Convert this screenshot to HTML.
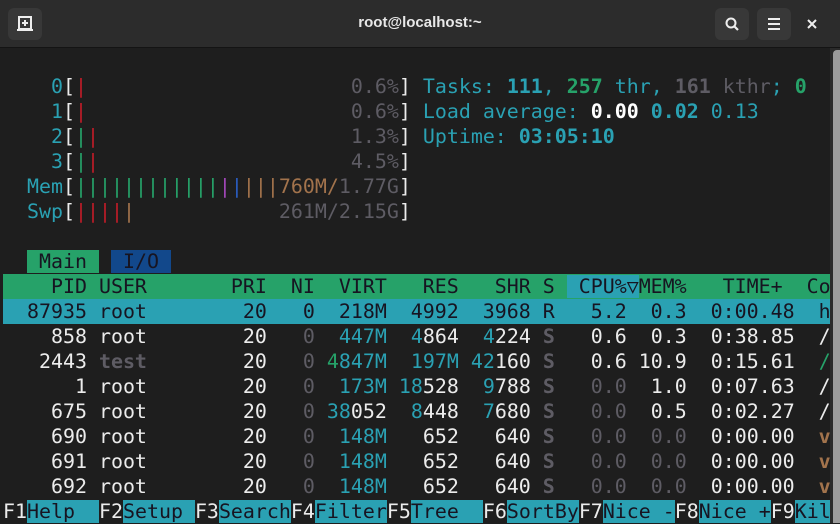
<!DOCTYPE html>
<html><head><meta charset="utf-8"><style>
html,body{margin:0;padding:0;background:#1e1e1e;width:840px;height:523px;overflow:hidden}
.tb{position:absolute;left:0;top:0;width:840px;height:47px;background:#2c2c2c;border-bottom:1px solid #141414}
.btn{position:absolute;top:8px;width:34px;height:32px;background:#383838;border-radius:6px}
.title{position:absolute;left:0;width:840px;top:14px;text-align:center;color:#e8e8e8;font:bold 15px "Liberation Sans",sans-serif}
.term{position:absolute;left:3px;top:74px;font-family:"DejaVu Sans Mono","Liberation Mono",monospace;font-size:19.93px;color:#ececec}
.r{height:25px;line-height:25px;white-space:pre}
.c{color:#2aa1b3}.cb{color:#2aa1b3;font-weight:bold}.g{color:#26a269}.gb{color:#26a269;font-weight:bold}
.wb{color:#fff;font-weight:bold}.k{color:#5e5c64}.kb{color:#5e5c64;font-weight:bold}
.rd{color:#c01c28}.m{color:#a347ba}.bl{color:#2a5dbf}.o{color:#a2734c}.ob{color:#a2734c;font-weight:bold}
.hd{background:#26a269;color:#171421;width:828px}
.sel{background:#2aa1b3;color:#171421;width:828px}
.cy{background:#2aa1b3;color:#171421}
.gn{background:#26a269;color:#171421}
.bu{background:#12488b;color:#171421}
.sb{position:absolute;left:830px;top:48px;width:10px;height:475px;background:#2a2a2a}
.th{position:absolute;left:833px;top:50px;width:7px;height:473px;background:#9c9c9c;border-radius:4px 0 0 0}
</style></head><body>
<div class="tb">
<div class="btn" style="left:8px"><svg width="34" height="32" viewBox="0 0 34 32"><rect x="11" y="9" width="12" height="12" fill="none" stroke="#eee" stroke-width="2"/><path d="M9 22h16M17 12v6M14 15h6" stroke="#eee" stroke-width="2"/></svg></div>
<div class="title">root@localhost:~</div>
<div class="btn" style="left:715px"><svg width="34" height="32" viewBox="0 0 34 32"><circle cx="16" cy="15" r="4.5" fill="none" stroke="#eee" stroke-width="2"/><path d="M19 18l4 4" stroke="#eee" stroke-width="2.2"/></svg></div>
<div class="btn" style="left:757px"><svg width="34" height="32" viewBox="0 0 34 32"><path d="M11 11h12M11 16h12M11 21h12" stroke="#eee" stroke-width="2"/></svg></div>
<svg style="position:absolute;left:805px;top:17px" width="14" height="14" viewBox="0 0 14 14"><path d="M3 3l8 8M11 3l-8 8" stroke="#eee" stroke-width="2"/></svg>
</div>
<div class="term">
<div class="r">    <span class="c">0</span>[<span class="rd">|</span>                      <span class="k">0.6%</span>] <span class="c">Tasks: </span><span class="cb">111</span><span class="c">, </span><span class="gb">257</span><span class="c"> thr, </span><span class="kb">161</span><span class="k"> kthr</span><span class="c">; </span><span class="gb">0</span></div>
<div class="r">    <span class="c">1</span>[<span class="rd">|</span>                      <span class="k">0.6%</span>] <span class="c">Load average: </span><span class="wb">0.00</span> <span class="cb">0.02</span> <span class="c">0.13</span></div>
<div class="r">    <span class="c">2</span>[<span class="g">|</span><span class="rd">|</span>                     <span class="k">1.3%</span>] <span class="c">Uptime: </span><span class="cb">03:05:10</span></div>
<div class="r">    <span class="c">3</span>[<span class="g">|</span><span class="rd">|</span>                     <span class="k">4.5%</span>]</div>
<div class="r">  <span class="c">Mem</span>[<span class="g">||||||||||||</span><span class="m">|</span><span class="bl">|</span><span class="o">|||760M/</span><span class="k">1.77G</span>]</div>
<div class="r">  <span class="c">Swp</span>[<span class="rd">||||</span><span class="o">|</span>            <span class="k">261M/2.15G</span>]</div>
<div class="r"> </div>
<div class="r">  <span class="gn"> Main </span> <span class="bu"> I/O </span></div>
<div class="r hd">    PID USER       PRI  NI  VIRT   RES   SHR S <span class="cy"> CPU%▽</span>MEM%   TIME+  Co</div>
<div class="r sel">  87935 root        20   0  218M  4992  3968 R   5.2  0.3  0:00.48  ht</div>
<div class="r">    858 root        20   <span class="k">0</span>  <span class="c">447M</span>  <span class="c">4</span>864  <span class="c">4</span>224 <span class="kb">S</span>   0.6  0.3  0:38.85  /u</div>
<div class="r">   2443 <span class="kb">test</span>        20   <span class="k">0</span> <span class="g">4</span><span class="c">847M</span>  <span class="c">197M</span> <span class="c">42</span>160 <span class="kb">S</span>   0.6 10.9  0:15.61  <span class="g">/u</span></div>
<div class="r">      1 root        20   <span class="k">0</span>  <span class="c">173M</span> <span class="c">18</span>528  <span class="c">9</span>788 <span class="kb">S</span>   <span class="k">0.0</span>  1.0  0:07.63  /u</div>
<div class="r">    675 root        20   <span class="k">0</span> <span class="c">38</span>052  <span class="c">8</span>448  <span class="c">7</span>680 <span class="kb">S</span>   <span class="k">0.0</span>  0.5  0:02.27  /u</div>
<div class="r">    690 root        20   <span class="k">0</span>  <span class="c">148M</span>   652   640 <span class="kb">S</span>   <span class="k">0.0</span>  <span class="k">0.0</span>  0:00.00  <span class="ob">vm</span></div>
<div class="r">    691 root        20   <span class="k">0</span>  <span class="c">148M</span>   652   640 <span class="kb">S</span>   <span class="k">0.0</span>  <span class="k">0.0</span>  0:00.00  <span class="ob">vm</span></div>
<div class="r">    692 root        20   <span class="k">0</span>  <span class="c">148M</span>   652   640 <span class="kb">S</span>   <span class="k">0.0</span>  <span class="k">0.0</span>  0:00.00  <span class="ob">vm</span></div>
<div class="r">F1<span class="cy">Help  </span>F2<span class="cy">Setup </span>F3<span class="cy">Search</span>F4<span class="cy">Filter</span>F5<span class="cy">Tree  </span>F6<span class="cy">SortBy</span>F7<span class="cy">Nice -</span>F8<span class="cy">Nice +</span>F9<span class="cy">Kil</span></div>
</div>
<div class="sb"></div><div class="th"></div>
</body></html>
